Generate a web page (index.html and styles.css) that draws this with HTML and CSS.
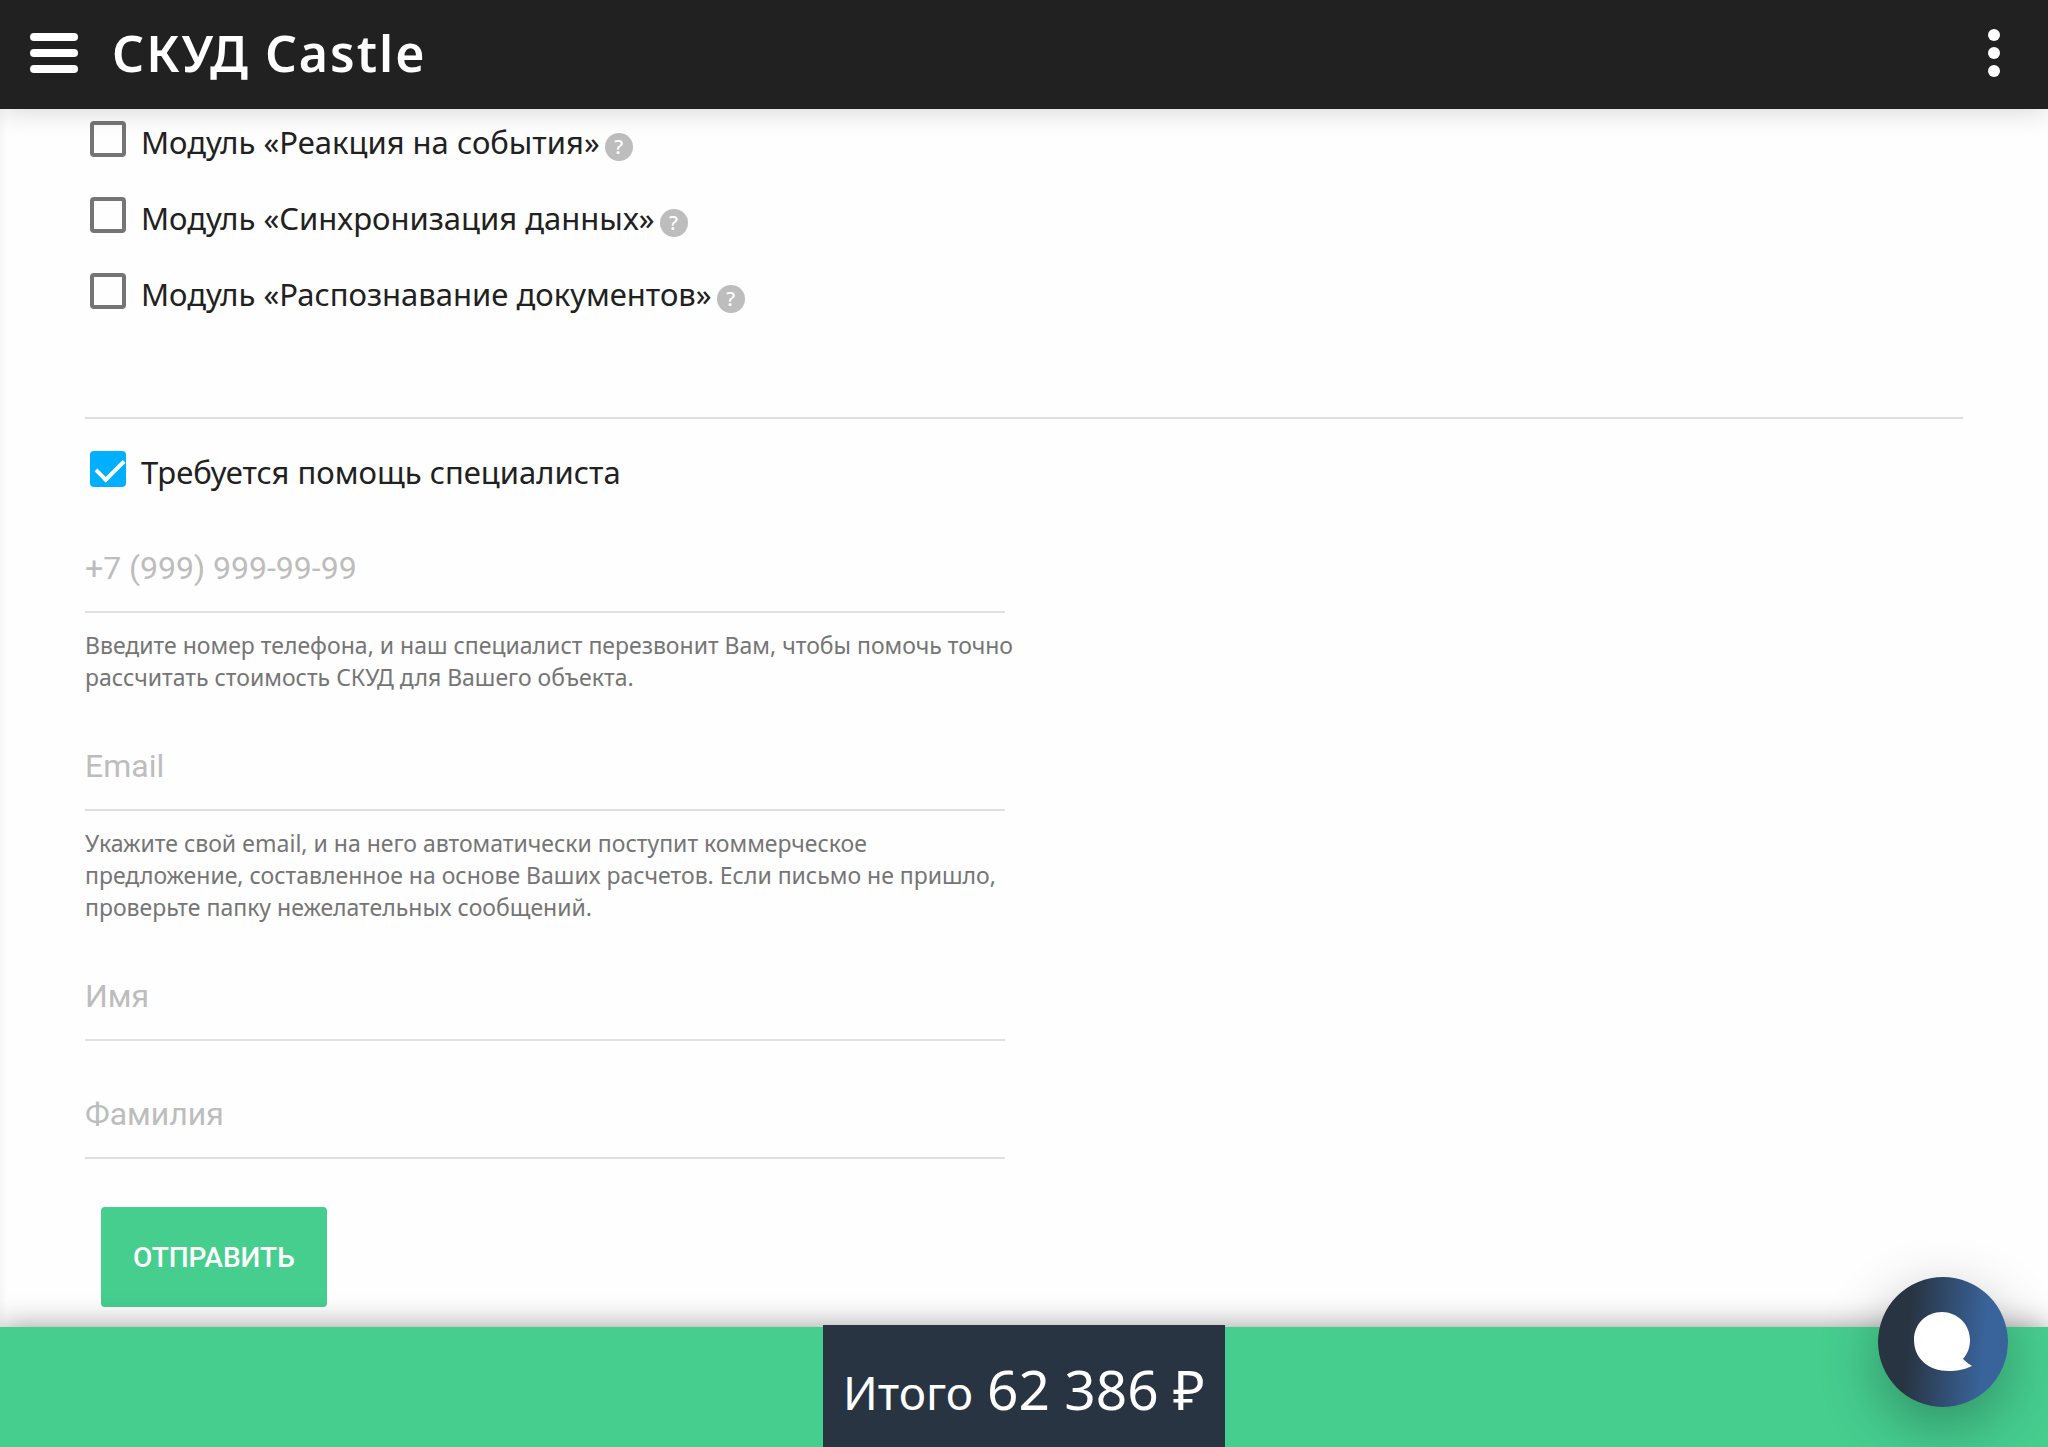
FILE: index.html
```html
<!DOCTYPE html>
<html lang="ru">
  <head>
    <meta charset="UTF-8" />
    <meta name="viewport" content="width=device-width, initial-scale=1" />
    <title>СКУД Castle</title>
    <link rel="stylesheet" href="styles.css">
  </head>
  <body>
    <header class="header">
      <button class="icon-button" type="button" aria-label="Меню">
        <svg width="48" height="40" viewBox="0 0 48 40" fill="#fff">
          <rect width="48" height="8" rx="4" />
          <rect y="16" width="48" height="8" rx="4" />
          <rect y="32" width="48" height="8" rx="4" />
        </svg>
      </button>
      <h1 class="title">СКУД Castle</h1>
      <button class="icon-button more" type="button" aria-label="Ещё">
        <svg width="12" height="48" viewBox="0 0 12 48" fill="#fff">
          <circle cx="6" cy="6" r="6" />
          <circle cx="6" cy="24" r="6" />
          <circle cx="6" cy="42" r="6" />
        </svg>
      </button>
    </header>

    <main class="content">
      <div class="modules">
        <div class="option">
          <input class="checkbox" type="checkbox" id="reaction" />
          <label for="reaction">Модуль «Реакция на события»</label>
          <span class="hint">?</span>
        </div>
        <div class="option">
          <input class="checkbox" type="checkbox" id="sync" />
          <label for="sync">Модуль «Синхронизация данных»</label>
          <span class="hint">?</span>
        </div>
        <div class="option">
          <input class="checkbox" type="checkbox" id="documents" />
          <label for="documents">Модуль «Распознавание документов»</label>
          <span class="hint">?</span>
        </div>
      </div>

      <hr class="divider" />

      <form class="form">
        <div class="option">
          <input class="checkbox" type="checkbox" id="help" checked />
          <label for="help">Требуется помощь специалиста</label>
        </div>
        <div class="fields">
          <div class="field">
            <input class="input" type="tel" placeholder="+7 (999) 999-99-99" aria-label="Телефон" aria-describedby="phone-note" />
            <p class="note" id="phone-note">Введите номер телефона, и наш специалист перезвонит Вам, чтобы помочь точно рассчитать стоимость СКУД для Вашего объекта.</p>
          </div>
          <div class="field">
            <input class="input" type="email" placeholder="Email" aria-label="Email" aria-describedby="email-note" />
            <p class="note" id="email-note">Укажите свой email, и на него автоматически поступит коммерческое предложение, составленное на основе Ваших расчетов. Если письмо не пришло, проверьте папку нежелательных сообщений.</p>
          </div>
          <div class="field">
            <input class="input" type="text" placeholder="Имя" aria-label="Имя" />
          </div>
          <div class="field">
            <input class="input" type="text" placeholder="Фамилия" aria-label="Фамилия" />
          </div>
        </div>
        <button class="submit" type="submit">ОТПРАВИТЬ</button>
      </form>
    </main>

    <footer class="footer">
      <div class="total">
        <span class="total-label">Итого</span>
        <span class="total-sum">62 386 ₽</span>
      </div>
    </footer>

    <button class="chat" type="button" aria-label="Чат">
      <svg width="58" height="60" viewBox="0 0 58 60" fill="#fff">
        <path d="M28 0C43 0 56 12 56 28C56 35 54 41 49 47C52 50 55 52 58 54C50 58 42 59 35 59C14 59 0 46 0 28C0 12 12 0 28 0Z" />
      </svg>
    </button>
  </body>
</html>
```
FILE: styles.css
```css
* {
  box-sizing: border-box;
}
body {
  display: flex;
  flex-direction: column;
  min-height: 100vh;
  margin: 0;
  background-color: #fefefe;
  color: #212121;
  font-family: "Noto Sans", sans-serif;
}
button {
  border: none;
  cursor: pointer;
}

/* header */
.header {
  position: sticky;
  top: 0;
  z-index: 1;
  display: flex;
  align-items: center;
  height: 109px;
  padding: 0 48px 3px 30px;
  background-color: #212121;
  box-shadow: 0 4px 24px rgba(0, 0, 0, 0.14);
}
.icon-button {
  display: flex;
  padding: 0;
  background: none;
}
.title {
  margin: 0 0 0 34px;
  color: #fff;
  font-size: 50px;
  font-weight: 600;
  line-height: 64px;
  letter-spacing: 2px;
}
.more {
  margin-left: auto;
}

/* content */
.content {
  flex: 1;
  padding: 3px 85px 20px;
  box-shadow: inset 6px 0 4px -2px rgba(0, 0, 0, 0.03);
}
.modules {
  display: flex;
  flex-direction: column;
  gap: 16px;
}
.option {
  display: flex;
  align-items: center;
  height: 60px;
  padding-left: 5px;
  font-size: 31px;
}
.checkbox {
  appearance: none;
  width: 36px;
  height: 36px;
  margin: 0 15px 6px 0;
  border: 4px solid #757575;
  border-radius: 4px;
}
.checkbox:checked {
  border: none;
  background-color: #00b0ff;
}
.checkbox:checked::before {
  content: "";
  display: block;
  width: 12px;
  height: 24px;
  margin: 2px 0 0 12px;
  border: solid #fff;
  border-width: 0 4px 4px 0;
  transform: rotate(45deg);
}
.hint {
  width: 28px;
  height: 28px;
  margin: 10px 0 0 5px;
  border-radius: 50%;
  background-color: #bdbdbd;
  color: #fff;
  font-size: 20px;
  font-weight: 500;
  line-height: 28px;
  text-align: center;
}
.divider {
  height: 2px;
  margin: 93px 0 23px;
  border: none;
  background-color: #e0e0e0;
}

/* form */
.fields {
  display: flex;
  flex-direction: column;
  gap: 30px;
  width: 50%;
  margin-top: 23px;
}
.input {
  display: block;
  width: 98%;
  height: 88px;
  padding: 0;
  border: none;
  border-bottom: 2px solid #e0e0e0;
  background: none;
  font-family: Roboto, sans-serif;
  font-size: 32px;
  outline: none;
}
.input::placeholder {
  color: #bdbdbd;
}
.note {
  margin: 16px 0 0;
  color: #757575;
  font-size: 23px;
  line-height: 32px;
}
.submit {
  height: 100px;
  margin: 48px 0 0 16px;
  padding: 0 32px;
  border-radius: 4px;
  background-color: #46ce8f;
  color: #fff;
  font-family: Roboto, sans-serif;
  font-size: 28px;
  font-weight: 500;
}

/* footer */
.footer {
  position: sticky;
  bottom: 0;
  display: flex;
  justify-content: center;
  align-items: flex-end;
  height: 120px;
  background-color: #46ce8f;
  box-shadow: 0 0 28px rgba(0, 0, 0, 0.4);
}
.total {
  display: flex;
  align-items: baseline;
  gap: 14px;
  height: 122px;
  padding: 22px 20px 0;
  background-color: #283442;
  color: #fff;
  line-height: 84px;
}
.total-label {
  font-size: 46px;
}
.total-sum {
  font-size: 55px;
}

/* chat button */
.chat {
  position: fixed;
  right: 40px;
  bottom: 40px;
  display: flex;
  justify-content: center;
  align-items: center;
  width: 130px;
  height: 130px;
  padding: 0;
  border-radius: 50%;
  background: linear-gradient(95deg, #283442 25%, #39649b 80%);
  box-shadow: 0 20px 60px rgba(0, 0, 0, 0.3);
}
```
